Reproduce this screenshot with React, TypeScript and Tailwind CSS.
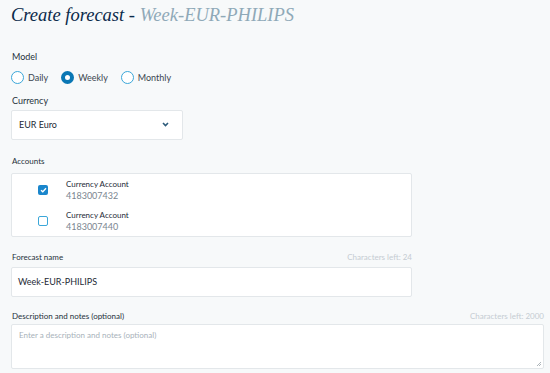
import React from "react";

export default function App() {
  const sans = { fontFamily: "Lato, 'Noto Sans', sans-serif" };
  return (
    <div className="w-[550px] h-[373px] bg-[#f7f9fa] overflow-hidden" style={sans}>
      <div className="pl-[11px] pr-[6px] pt-[1px]">
        <h1 className="text-[18.5px] leading-[28px] italic text-[#0b2a4a]" style={{ fontFamily: "'Liberation Serif', serif" }}>
          Create forecast - <span className="text-[#8fa9b8]">Week-EUR-PHILIPS</span>
        </h1>

        <div className="mt-[22px] text-[9px] leading-[12px] text-[#26313b] pl-[1px]">Model</div>
        <div className="mt-[8px] flex items-center text-[9px] text-[#3a4650]">
          <label className="flex items-center mr-[13px]">
            <span className="w-[13px] h-[13px] rounded-full border border-[#3ba7d9] bg-white" />
            <span className="ml-[4px]">Daily</span>
          </label>
          <label className="flex items-center mr-[13px]">
            <span className="w-[13px] h-[13px] rounded-full border-[4px] border-[#0a77b4] bg-white" />
            <span className="ml-[4px]">Weekly</span>
          </label>
          <label className="flex items-center">
            <span className="w-[13px] h-[13px] rounded-full border border-[#3ba7d9] bg-white" />
            <span className="ml-[4px]">Monthly</span>
          </label>
        </div>

        <div className="mt-[10px] text-[9px] leading-[12px] text-[#26313b] pl-[1px]">Currency</div>
        <div className="mt-[3px] w-[172px] h-[30px] bg-white border border-[#e3e7ea] rounded-[2px] flex items-center justify-between pl-[7px] pr-[13px] text-[9px] text-[#1e2a36]">
          <span>EUR Euro</span>
          <svg width="7" height="5" viewBox="0 0 7 5">
            <path d="M1 1 L3.5 3.5 L6 1" stroke="#2b5a7a" strokeWidth="1.6" fill="none" />
          </svg>
        </div>

        <div className="mt-[15px] text-[8px] leading-[12px] text-[#26313b] pl-[1px]">Accounts</div>
        <div className="mt-[6px] w-[401px] h-[64px] bg-white border border-[#e3e7ea] rounded-[2px] pt-[5px]">
          <div className="flex items-start h-[31px]">
            <div className="w-[36px] flex justify-end pt-[6px]">
              <span className="w-[10px] h-[10px] rounded-[2px] bg-[#1a86cc] flex items-center justify-center">
                <svg width="7" height="6" viewBox="0 0 7 6">
                  <path d="M1 3.2 L2.8 4.8 L6 1.2" stroke="white" strokeWidth="1.3" fill="none" />
                </svg>
              </span>
            </div>
            <div className="ml-[18px] leading-[11px]">
              <div className="text-[8px] text-[#1e2a36]">Currency Account</div>
              <div className="text-[9px] text-[#7a8690]">4183007432</div>
            </div>
          </div>
          <div className="flex items-start">
            <div className="w-[36px] flex justify-end pt-[6px]">
              <span className="w-[10px] h-[10px] rounded-[2px] border border-[#3ba7d9] bg-white" />
            </div>
            <div className="ml-[18px] leading-[11px]">
              <div className="text-[8px] text-[#1e2a36]">Currency Account</div>
              <div className="text-[9px] text-[#7a8690]">4183007440</div>
            </div>
          </div>
        </div>

        <div className="mt-[14px] w-[401px] flex justify-between items-center text-[8px] leading-[12px]">
          <span className="text-[#26313b] pl-[1px]">Forecast name</span>
          <span className="text-[#c5ccd2]">Characters left: 24</span>
        </div>
        <div className="mt-[4px] w-[401px] h-[30px] bg-white border border-[#e3e7ea] rounded-[2px] flex items-center pl-[6px] text-[9px] text-[#1e2a36]">
          Week-EUR-PHILIPS
        </div>

        <div className="mt-[13px] flex justify-between items-center text-[8px] leading-[12px]">
          <span className="text-[#26313b] pl-[1px]">Description and notes (optional)</span>
          <span className="text-[#c5ccd2]">Characters left: 2000</span>
        </div>
        <div className="mt-[2px] relative h-[45px] bg-white border border-[#e3e7ea] rounded-[2px] pl-[7px] pt-[4px] text-[8px] text-[#a8b2ba]">
          Enter a description and notes (optional)
          <svg className="absolute right-[1px] bottom-[1px]" width="6" height="6" viewBox="0 0 6 6">
            <path d="M5 1 L1 5 M5 3 L3 5" stroke="#9aa3aa" strokeWidth="0.8" />
          </svg>
        </div>
      </div>
    </div>
  );
}
